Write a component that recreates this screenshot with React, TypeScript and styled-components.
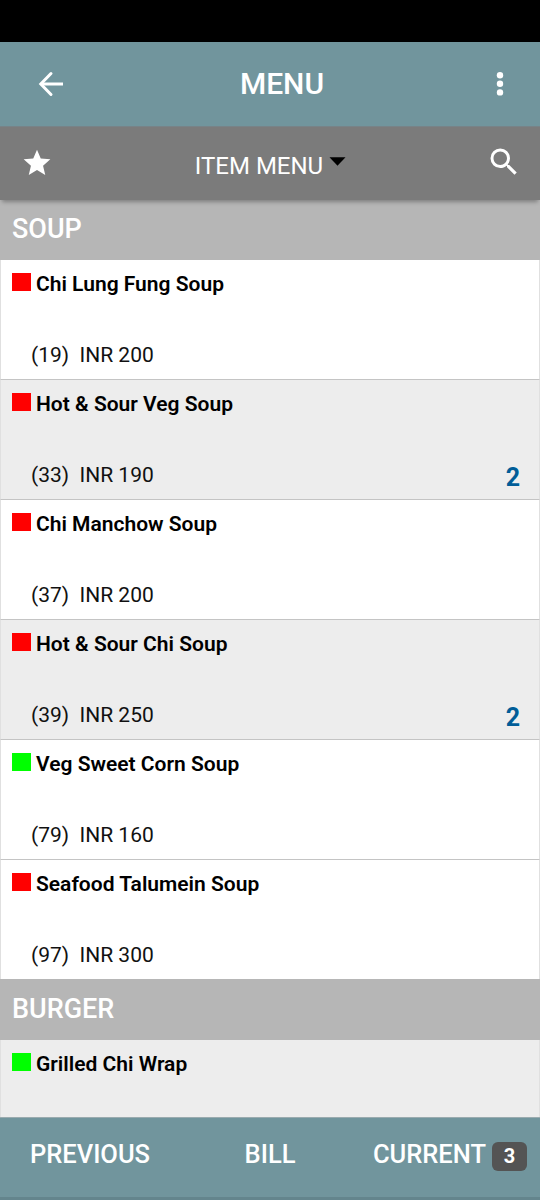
import React from "react";
import styled, { createGlobalStyle } from "styled-components";

const Global = createGlobalStyle`
  * { box-sizing: border-box; }
  body { margin: 0; background: #fff; font-family: Roboto, "Liberation Sans", sans-serif; }
  button { font: inherit; color: inherit; background: none; border: 0; padding: 0; margin: 0; }
  svg { display: block; }
`;

const Screen = styled.div`
  width: 540px;
  height: 1200px;
  display: flex;
  flex-direction: column;
  overflow: hidden;
`;

const StatusBar = styled.div`
  height: 42px;
  flex: none;
  background: #000;
`;

const Header = styled.header`
  height: 84px;
  flex: none;
  display: grid;
  grid-template-columns: 102px 1fr 81px;
  align-items: center;
  background: #71959d;
  color: #fff;
`;

const IconButton = styled.button`
  display: flex;
  justify-content: center;
`;

const Title = styled.h1`
  margin: 0 0 0 3px;
  text-align: center;
  font-size: 30px;
  line-height: 36px;
  font-weight: 500;
`;

const Toolbar = styled.div`
  height: 74px;
  flex: none;
  display: grid;
  grid-template-columns: 74px 1fr 73px;
  background: #7b7b7b;
  color: #fff;
  box-shadow: 0 4px 4px -2px rgba(0, 0, 0, 0.3);
  z-index: 1;
  border-top: 1px solid #778388;
`;

const ToolButton = styled.button<{ $top: number }>`
  display: flex;
  justify-content: center;
  align-items: flex-start;
  padding-top: ${(p) => p.$top}px;
`;

const Picker = styled.button`
  display: flex;
  justify-content: center;
  align-items: flex-start;
  gap: 6px;
  padding-top: 25px;
  font-size: 24px;
  line-height: 28px;

  svg { margin-top: 5px; }
`;

const List = styled.main`
  flex: 1;
  min-height: 0;
  overflow: hidden;
`;

const SectionTitle = styled.h2<{ $lead?: boolean }>`
  margin: 0;
  height: ${(p) => (p.$lead ? 60 : 61)}px;
  padding: ${(p) => (p.$lead ? 13 : 14)}px 12px 0;
  background: #b6b6b6;
  color: #fff;
  font-size: 27px;
  line-height: 32px;
  font-weight: 500;
`;

const Row = styled.article<{ $shaded?: boolean; $last?: boolean }>`
  height: ${(p) => (p.$last ? 119 : 120)}px;
  padding: 11px 19px 0 11px;
  display: flex;
  flex-direction: column;
  background: ${(p) => (p.$shaded ? "#ededed" : "#fff")};
  border: 1px solid #e0e0e0;
  border-width: 0 1px ${(p) => (p.$last ? 0 : 1)}px;
  border-bottom-color: #c4c4c4;
`;

const NameLine = styled.div`
  display: flex;
  align-items: flex-start;
  gap: 5px;
  font-size: 21px;
  line-height: 26px;
  font-weight: 600;
  color: #000;
`;

const Marker = styled.span<{ $veg?: boolean }>`
  width: 19px;
  height: 18px;
  margin-top: 2px;
  background: ${(p) => (p.$veg ? "#00ff00" : "#ff0000")};
`;

const PriceLine = styled.div`
  margin-top: 45px;
  display: flex;
  justify-content: space-between;
  padding-left: 19px;
  font-size: 21px;
  line-height: 26px;
  color: #111;
  white-space: pre;
`;

const Quantity = styled.strong`
  margin-top: 3px;
  font-size: 25px;
  font-weight: 700;
  color: #005d98;
`;

const Footer = styled.footer`
  height: 83px;
  flex: none;
  display: grid;
  grid-template-columns: 180px 180px 180px;
  background: #71959d;
  color: #fff;
  border-top: 1px solid #9aabaf;
  border-bottom: 3px solid #64858d;
`;

const FooterTab = styled.button`
  display: flex;
  justify-content: center;
  gap: 6px;
  padding-top: 20px;
  font-size: 25.5px;
  line-height: 32px;
  font-weight: 500;
`;

const Badge = styled.span`
  width: 35px;
  height: 29px;
  margin-top: 4px;
  border-radius: 6px;
  background: #545454;
  font-size: 20px;
  line-height: 29px;
  font-weight: 700;
  text-align: center;
`;

type Item = { code: number; name: string; price: number; veg?: boolean; count?: number; shaded?: boolean };

const soups: Item[] = [
  { code: 19, name: "Chi Lung Fung Soup", price: 200 },
  { code: 33, name: "Hot & Sour Veg Soup", price: 190, count: 2, shaded: true },
  { code: 37, name: "Chi Manchow Soup", price: 200 },
  { code: 39, name: "Hot & Sour Chi Soup", price: 250, count: 2, shaded: true },
  { code: 79, name: "Veg Sweet Corn Soup", price: 160, veg: true },
  { code: 97, name: "Seafood Talumein Soup", price: 300 },
];

export default function App() {
  return (
    <>
      <Global />
      <Screen>
        <StatusBar />
        <Header>
          <IconButton aria-label="Back">
            <svg width="36" height="36" viewBox="0 0 24 24" fill="none" stroke="#fff" strokeWidth="2">
              <path d="M20 12H5.7" />
              <path d="M12 5L5.2 12l6.8 7" strokeLinecap="round" />
            </svg>
          </IconButton>
          <Title>MENU</Title>
          <IconButton aria-label="More">
            <svg width="8" height="27" viewBox="0 0 8 27" fill="#fff">
              <circle cx="4" cy="4.2" r="3.2" />
              <circle cx="4" cy="12.8" r="3.2" />
              <circle cx="4" cy="21.4" r="3.2" />
            </svg>
          </IconButton>
        </Header>
        <Toolbar>
          <ToolButton $top={20} aria-label="Favourites">
            <svg width="32" height="32" viewBox="0 0 24 24" fill="#fff">
              <path d="M12 17.27L18.18 21l-1.64-7.03L22 9.24l-7.19-.61L12 2 9.19 8.63 2 9.24l5.46 4.73L5.82 21z" />
            </svg>
          </ToolButton>
          <Picker>
            ITEM MENU
            <svg width="17" height="9" viewBox="0 0 17 9">
              <path d="M0.5 0.3H16.5L8.5 8.7Z" fill="#000" />
            </svg>
          </Picker>
          <ToolButton $top={17} aria-label="Search">
            <svg width="36" height="36" viewBox="0 0 24 24" fill="#fff">
              <path d="M15.5 14h-.79l-.28-.27A6.47 6.47 0 0 0 16 9.5 6.5 6.5 0 1 0 9.5 16c1.61 0 3.09-.59 4.23-1.57l.27.28v.79l5 4.99L20.49 19l-4.99-5zm-6 0C7.01 14 5 11.99 5 9.5S7.01 5 9.5 5 14 7.01 14 9.5 11.99 14 9.5 14z" />
            </svg>
          </ToolButton>
        </Toolbar>
        <List>
          <SectionTitle $lead>SOUP</SectionTitle>
          {soups.map((item, i) => (
            <ItemRow key={item.code} item={item} last={i === soups.length - 1} />
          ))}
          <SectionTitle>BURGER</SectionTitle>
          <Row $shaded>
            <NameLine>
              <Marker $veg />
              Grilled Chi Wrap
            </NameLine>
          </Row>
        </List>
        <Footer>
          <FooterTab>PREVIOUS</FooterTab>
          <FooterTab>BILL</FooterTab>
          <FooterTab>
            CURRENT
            <Badge>3</Badge>
          </FooterTab>
        </Footer>
      </Screen>
    </>
  );
}

function ItemRow({ item, last }: { item: Item; last: boolean }) {
  return (
    <Row $shaded={item.shaded} $last={last}>
      <NameLine>
        <Marker $veg={item.veg} />
        {item.name}
      </NameLine>
      <PriceLine>
        <span>{`(${item.code})  INR ${item.price}`}</span>
        {item.count && <Quantity>{item.count}</Quantity>}
      </PriceLine>
    </Row>
  );
}
